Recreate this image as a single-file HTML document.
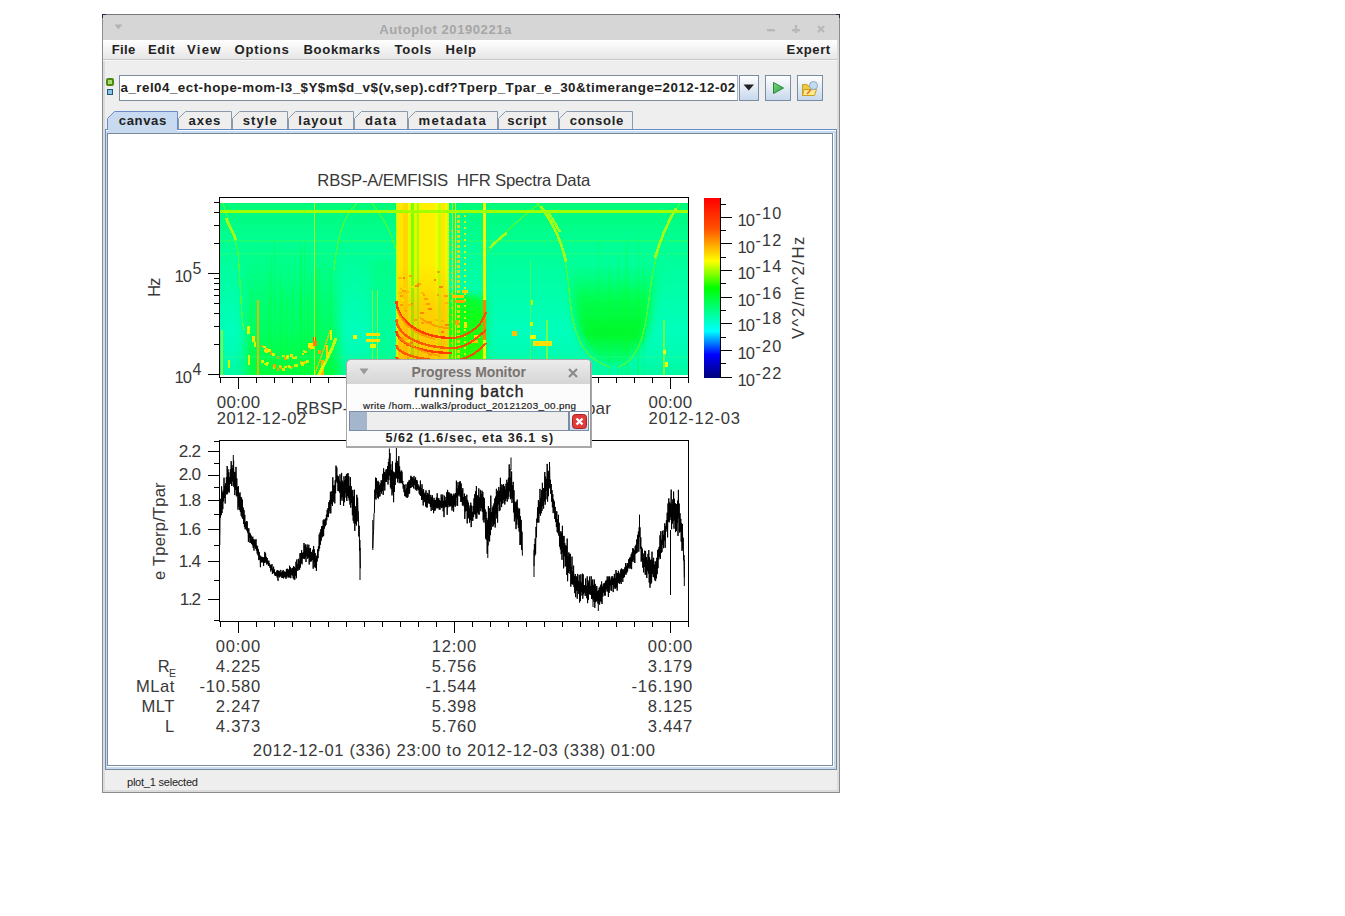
<!DOCTYPE html><html><head><meta charset="utf-8"><title>Autoplot</title><style>html,body{margin:0;padding:0;background:#fff;width:1345px;height:916px;overflow:hidden;position:relative}.t{position:absolute;white-space:pre;line-height:1;font-family:"Liberation Sans",sans-serif;color:#000}.p{color:#383838}svg{display:block}</style></head><body>
<div style="position:absolute;left:102px;top:14px;width:738px;height:779px;background:#eeeeee;box-sizing:border-box;border:1px solid #8c8c8c;border-top-color:#7a7a7a"></div>
<div style="position:absolute;left:103px;top:15px;width:736px;height:777px;box-sizing:border-box;border:2px solid #dcdcdc;border-top:none"></div>
<div style="position:absolute;left:103px;top:15px;width:736px;height:25px;background:#d6d6d6"></div>
<div style="position:absolute;left:102px;top:14px;width:4px;height:4px;border-left:1px solid #1a2a40;border-top:1px solid #1a2a40;box-sizing:border-box"></div>
<div style="position:absolute;left:836px;top:14px;width:4px;height:4px;border-right:1px solid #1a2a40;border-top:1px solid #1a2a40;box-sizing:border-box"></div>
<svg style="position:absolute;left:114px;top:24px" width="10" height="7"><path d="M0.5 0.5 L8.5 0.5 L4.5 5.5 Z" fill="#b4b4b4"/></svg>
<span class="t" style="left:379.30px;top:22.53px;font-size:13.08px;letter-spacing:0.54px;font-weight:bold;color:#a6a6a6;">Autoplot 20190221a</span>
<svg style="position:absolute;left:760px;top:20px" width="72" height="18"><rect x="7" y="9" width="8" height="2.4" fill="#b8b8b8"/><rect x="32" y="9" width="8" height="2.4" fill="#b8b8b8"/><rect x="34.8" y="5" width="2.4" height="8" fill="#b8b8b8"/><path d="M58 6 L64 12 M64 6 L58 12" stroke="#b8b8b8" stroke-width="2.4"/></svg>
<div style="position:absolute;left:103px;top:40px;width:734px;height:19px;background:linear-gradient(#ffffff,#e6e6e6)"></div>
<div style="position:absolute;left:103px;top:59px;width:734px;height:1px;background:#c8c8c8"></div>
<div style="position:absolute;left:103px;top:60px;width:734px;height:1px;background:#f8f8f8"></div>
<span class="t" style="left:111.70px;top:42.73px;font-size:13.08px;letter-spacing:0.39px;font-weight:bold;color:#222;">File</span>
<span class="t" style="left:148.00px;top:42.73px;font-size:13.08px;letter-spacing:0.60px;font-weight:bold;color:#222;">Edit</span>
<span class="t" style="left:187.00px;top:42.73px;font-size:13.08px;letter-spacing:1.30px;font-weight:bold;color:#222;">View</span>
<span class="t" style="left:234.40px;top:42.73px;font-size:13.08px;letter-spacing:0.83px;font-weight:bold;color:#222;">Options</span>
<span class="t" style="left:303.50px;top:42.73px;font-size:13.08px;letter-spacing:0.66px;font-weight:bold;color:#222;">Bookmarks</span>
<span class="t" style="left:394.40px;top:42.73px;font-size:13.08px;letter-spacing:0.75px;font-weight:bold;color:#222;">Tools</span>
<span class="t" style="left:445.60px;top:42.73px;font-size:13.08px;letter-spacing:0.68px;font-weight:bold;color:#222;">Help</span>
<span class="t" style="left:786.60px;top:42.73px;font-size:13.08px;letter-spacing:0.58px;font-weight:bold;color:#222;">Expert</span>
<div style="position:absolute;left:106px;top:78px;width:8px;height:8px;box-sizing:border-box;border:2px solid #4a8a10;border-radius:2px;background:#a8dc70"></div>
<div style="position:absolute;left:107px;top:89px;width:6px;height:6px;box-sizing:border-box;border:1px solid #1e5a80;background:#8cc4e6"></div>
<div style="position:absolute;left:119px;top:75px;width:619px;height:26px;background:#fff;box-sizing:border-box;border:1px solid #7a8ca0;border-right-color:#a8b4c0"></div>
<span class="t" style="left:120.50px;top:81.48px;font-size:13.37px;letter-spacing:0.48px;font-weight:bold;color:#222;">a_rel04_ect-hope-mom-l3_$Y$m$d_v$(v,sep).cdf?Tperp_Tpar_e_30&amp;timerange=2012-12-02</span>
<div style="position:absolute;left:739px;top:75px;width:20px;height:26px;box-sizing:border-box;border:1px solid #7a8ca0;background:linear-gradient(#ffffff,#c6d8ec)"></div>
<div style="position:absolute;left:765px;top:75px;width:26px;height:26px;box-sizing:border-box;border:1px solid #7a8ca0;background:linear-gradient(#ffffff,#c6d8ec)"></div>
<div style="position:absolute;left:797px;top:75px;width:26px;height:26px;box-sizing:border-box;border:1px solid #7a8ca0;background:linear-gradient(#ffffff,#c6d8ec)"></div>
<svg style="position:absolute;left:743px;top:84px" width="12" height="8"><path d="M0.5 0.5 L11 0.5 L5.75 6.5 Z" fill="#222"/></svg>
<svg style="position:absolute;left:771px;top:80px" width="16" height="16"><defs><linearGradient id="pg" x1="0" y1="0" x2="1" y2="1"><stop offset="0" stop-color="#7ad87a"/><stop offset="1" stop-color="#28a040"/></linearGradient></defs><path d="M2.5 2.5 L12.5 8 L2.5 13.5 Z" fill="url(#pg)" stroke="#2a8a3a" stroke-width="1"/></svg>
<svg style="position:absolute;left:800px;top:80px" width="20" height="18"><path d="M2.5 4.5 L7 4.5 L8 6 L13 6 L13 15.5 L2.5 15.5 Z" fill="#f0c848" stroke="#c8a020"/><path d="M4 9.5 L16.5 9.5 L14.5 15.5 L2.5 15.5 Z" fill="#ffe890" stroke="#c8a020"/><line x1="7" y1="14" x2="11" y2="9.5" stroke="#f07030" stroke-width="1.6"/><circle cx="13.5" cy="5.5" r="4" fill="#c0dcf4" stroke="#98aac0"/></svg>
<svg style="position:absolute;left:107px;top:111px" width="72" height="21"><path d="M0.5 20 L0.5 7.5 L7.5 0.5 L70.5 0.5 L70.5 20" fill="#c8daf0" stroke="#6a8ac6"/></svg>
<span class="t" style="left:118.75px;top:113.53px;font-size:13.08px;letter-spacing:0.63px;font-weight:bold;color:#222;">canvas</span>
<svg style="position:absolute;left:178px;top:111px" width="55" height="21"><path d="M0.5 20 L0.5 7.5 L7.5 0.5 L53.5 0.5 L53.5 20" fill="#eeeeee" stroke="#8a9aaa"/></svg>
<span class="t" style="left:188.50px;top:113.53px;font-size:13.08px;letter-spacing:0.93px;font-weight:bold;color:#222;">axes</span>
<svg style="position:absolute;left:232px;top:111px" width="57" height="21"><path d="M0.5 20 L0.5 7.5 L7.5 0.5 L55.5 0.5 L55.5 20" fill="#eeeeee" stroke="#8a9aaa"/></svg>
<span class="t" style="left:242.70px;top:113.53px;font-size:13.08px;letter-spacing:1.05px;font-weight:bold;color:#222;">style</span>
<svg style="position:absolute;left:288px;top:111px" width="67" height="21"><path d="M0.5 20 L0.5 7.5 L7.5 0.5 L65.5 0.5 L65.5 20" fill="#eeeeee" stroke="#8a9aaa"/></svg>
<span class="t" style="left:298.30px;top:113.53px;font-size:13.08px;letter-spacing:1.04px;font-weight:bold;color:#222;">layout</span>
<svg style="position:absolute;left:354px;top:111px" width="55" height="21"><path d="M0.5 20 L0.5 7.5 L7.5 0.5 L53.5 0.5 L53.5 20" fill="#eeeeee" stroke="#8a9aaa"/></svg>
<span class="t" style="left:365.00px;top:113.53px;font-size:13.08px;letter-spacing:1.34px;font-weight:bold;color:#222;">data</span>
<svg style="position:absolute;left:408px;top:111px" width="91" height="21"><path d="M0.5 20 L0.5 7.5 L7.5 0.5 L89.5 0.5 L89.5 20" fill="#eeeeee" stroke="#8a9aaa"/></svg>
<span class="t" style="left:418.50px;top:113.53px;font-size:13.08px;letter-spacing:1.42px;font-weight:bold;color:#222;">metadata</span>
<svg style="position:absolute;left:498px;top:111px" width="62" height="21"><path d="M0.5 20 L0.5 7.5 L7.5 0.5 L60.5 0.5 L60.5 20" fill="#eeeeee" stroke="#8a9aaa"/></svg>
<span class="t" style="left:507.30px;top:113.53px;font-size:13.08px;letter-spacing:0.68px;font-weight:bold;color:#222;">script</span>
<svg style="position:absolute;left:559px;top:111px" width="75" height="21"><path d="M0.5 20 L0.5 7.5 L7.5 0.5 L73.5 0.5 L73.5 20" fill="#eeeeee" stroke="#8a9aaa"/></svg>
<span class="t" style="left:569.80px;top:113.53px;font-size:13.08px;letter-spacing:0.68px;font-weight:bold;color:#222;">console</span>
<div style="position:absolute;left:105px;top:129px;width:732px;height:641px;box-sizing:border-box;border:1px solid #6a8ac6;border-bottom-color:#7a8a9a;border-right-color:#7a8a9a;background:#c8daf0"></div>
<div style="position:absolute;left:106px;top:130px;width:730px;height:1px;background:#fff"></div>
<div style="position:absolute;left:108px;top:129px;width:69px;height:2px;background:#c8daf0"></div>
<div style="position:absolute;left:107px;top:133px;width:727px;height:634px;background:#fff"></div>
<div style="position:absolute;left:107px;top:133px;width:726px;height:633px;box-sizing:border-box;border:1px solid #7a8a9a;background:#fff"></div>
<span class="t" style="left:127.00px;top:776.65px;font-size:11.05px;letter-spacing:-0.24px;color:#222;">plot_1 selected</span>
<svg style="position:absolute;left:0;top:0" width="1345" height="916" shape-rendering="crispEdges">
<defs><linearGradient id="sg" x1="0" y1="0" x2="0" y2="1"><stop offset="0" stop-color="#00fa78"/><stop offset="0.2" stop-color="#00ff90"/><stop offset="0.5" stop-color="#00ffa8"/><stop offset="0.75" stop-color="#00ffbc"/><stop offset="0.9" stop-color="#00fcb0"/><stop offset="1" stop-color="#00f8a0"/></linearGradient><linearGradient id="gU" x1="0" y1="0" x2="0" y2="1"><stop offset="0" stop-color="#00ff40" stop-opacity="0"/><stop offset="0.45" stop-color="#00ff40" stop-opacity="0.55"/><stop offset="1" stop-color="#00ff30" stop-opacity="0.9"/></linearGradient><linearGradient id="gU2" x1="0" y1="0" x2="0" y2="1"><stop offset="0" stop-color="#00ff40" stop-opacity="0"/><stop offset="0.35" stop-color="#00ff30" stop-opacity="0.75"/><stop offset="0.7" stop-color="#00f820" stop-opacity="0.95"/><stop offset="1" stop-color="#00ff40" stop-opacity="0.45"/></linearGradient><linearGradient id="yg" x1="0" y1="0" x2="0" y2="1"><stop offset="0" stop-color="#f0ff00"/><stop offset="0.3" stop-color="#ffee00"/><stop offset="0.55" stop-color="#ffd400"/><stop offset="0.8" stop-color="#ffb400"/><stop offset="1" stop-color="#ffa800"/></linearGradient><filter id="bl" x="-50%" y="-50%" width="200%" height="200%"><feGaussianBlur stdDeviation="5 2"/></filter><filter id="bl2" x="-50%" y="-50%" width="200%" height="200%"><feGaussianBlur stdDeviation="0.6"/></filter><clipPath id="sc"><rect x="220" y="203" width="468" height="172"/></clipPath></defs>
<g clip-path="url(#sc)">
<rect x="220" y="203" width="468" height="172" fill="url(#sg)"/>
<path d="M242 240 L336 240 L340 378 L246 378 Z" fill="url(#gU)" filter="url(#bl)"/>
<path d="M568 262 L660 262 L652 300 C648 335 642 358 615 365 C592 364 580 345 574 310 Z" fill="url(#gU2)" filter="url(#bl)"/>
<path d="M449 290 L486 300 L486 375 L449 375 Z" fill="#00ff40" filter="url(#bl)" opacity="0.9"/>
<path d="M370 260 L396 260 L396 375 L370 375 Z" fill="#00ff60" filter="url(#bl)" opacity="0.35"/>
<rect x="269.0" y="273" width="1" height="102" fill="#00ff20" opacity="0.35"/>
<rect x="279.6" y="276" width="1" height="99" fill="#00ff20" opacity="0.35"/>
<rect x="300.1" y="244" width="1" height="131" fill="#00ff20" opacity="0.35"/>
<rect x="251.1" y="290" width="1" height="85" fill="#00ff20" opacity="0.35"/>
<rect x="270.7" y="254" width="1" height="121" fill="#00ff20" opacity="0.35"/>
<rect x="329.7" y="268" width="1" height="107" fill="#00ff20" opacity="0.35"/>
<rect x="316.9" y="269" width="1" height="106" fill="#00ff20" opacity="0.35"/>
<rect x="301.1" y="249" width="1" height="126" fill="#00ff20" opacity="0.35"/>
<rect x="300.8" y="292" width="1" height="83" fill="#00ff20" opacity="0.35"/>
<rect x="291.9" y="284" width="1" height="91" fill="#00ff20" opacity="0.35"/>
<rect x="303.7" y="244" width="1" height="131" fill="#00ff20" opacity="0.35"/>
<rect x="310.7" y="275" width="1" height="100" fill="#00ff20" opacity="0.35"/>
<rect x="274.1" y="242" width="1" height="133" fill="#00ff20" opacity="0.35"/>
<rect x="319.2" y="268" width="1" height="107" fill="#00ff20" opacity="0.35"/>
<rect x="307.5" y="293" width="1" height="82" fill="#00ff20" opacity="0.35"/>
<rect x="307.1" y="295" width="1" height="80" fill="#00ff20" opacity="0.35"/>
<rect x="281.6" y="288" width="1" height="87" fill="#00ff20" opacity="0.35"/>
<rect x="285.6" y="296" width="1" height="79" fill="#00ff20" opacity="0.35"/>
<rect x="638.3" y="236" width="1" height="139" fill="#00ff20" opacity="0.3"/>
<rect x="597.5" y="243" width="1" height="132" fill="#00ff20" opacity="0.3"/>
<rect x="643.1" y="256" width="1" height="119" fill="#00ff20" opacity="0.3"/>
<rect x="624.5" y="248" width="1" height="127" fill="#00ff20" opacity="0.3"/>
<rect x="617.9" y="253" width="1" height="122" fill="#00ff20" opacity="0.3"/>
<rect x="609.3" y="265" width="1" height="110" fill="#00ff20" opacity="0.3"/>
<rect x="622.1" y="284" width="1" height="91" fill="#00ff20" opacity="0.3"/>
<rect x="627.5" y="286" width="1" height="89" fill="#00ff20" opacity="0.3"/>
<rect x="637.1" y="289" width="1" height="86" fill="#00ff20" opacity="0.3"/>
<rect x="626.9" y="240" width="1" height="135" fill="#00ff20" opacity="0.3"/>
<rect x="220" y="240" width="468" height="2" fill="#30ff60" opacity="0.55"/>
<rect x="220" y="253" width="468" height="1.5" fill="#30ff70" opacity="0.35"/>
<rect x="220" y="356" width="468" height="1.5" fill="#20ff80" opacity="0.3"/>
<path d="M223 203 C226 215 233 230 238 252 C241 290 241 318 244 330" fill="none" stroke="#60ff20" stroke-width="1.4" opacity="0.75"/>
<path d="M334 270 C337 240 342 218 357 203" fill="none" stroke="#60ff20" stroke-width="1.4" opacity="0.75"/>
<path d="M372 203 C380 215 390 226 396 250" fill="none" stroke="#60ff20" stroke-width="1.4" opacity="0.75"/>
<path d="M537 203 C552 222 566 245 569 290 C572 330 580 358 610 367" fill="none" stroke="#60ff20" stroke-width="1.4" opacity="0.75"/>
<path d="M680 203 C668 222 655 250 650 290 C646 330 640 360 618 367" fill="none" stroke="#60ff20" stroke-width="1.4" opacity="0.75"/>
<path d="M488 252 C500 236 518 220 540 203" fill="none" stroke="#60ff20" stroke-width="1.4" opacity="0.75"/>
<path d="M226 218 C229 226 233 232 236 240" fill="none" stroke="#c8ff00" stroke-width="2.6" opacity="0.8"/>
<path d="M676 208 C668 222 660 240 655 258" fill="none" stroke="#c8ff00" stroke-width="2.6" opacity="0.8"/>
<path d="M490 248 C495 242 500 238 507 233" fill="none" stroke="#c8ff00" stroke-width="2.6" opacity="0.8"/>
<path d="M541 206 C552 222 562 240 566 262" fill="none" stroke="#c8ff00" stroke-width="2.6" opacity="0.8"/>
<path d="M547 210 C552 218 556 225 560 232" fill="none" stroke="#c8ff00" stroke-width="2.6" opacity="0.8"/>
<rect x="284" y="357" width="3" height="3" fill="#ffa000" opacity="0.9"/>
<rect x="286" y="355" width="3" height="2" fill="#ffa000" opacity="0.9"/>
<rect x="266" y="348" width="2" height="3" fill="#ffc800" opacity="0.9"/>
<rect x="309" y="348" width="2" height="2" fill="#ffa000" opacity="0.9"/>
<rect x="264" y="349" width="2" height="3" fill="#ffe000" opacity="0.9"/>
<rect x="277" y="356" width="2" height="3" fill="#ffa000" opacity="0.9"/>
<rect x="286" y="356" width="3" height="3" fill="#e8ff00" opacity="0.9"/>
<rect x="311" y="347" width="3" height="2" fill="#e8ff00" opacity="0.9"/>
<rect x="287" y="355" width="2" height="3" fill="#e8ff00" opacity="0.9"/>
<rect x="266" y="350" width="2" height="2" fill="#ffc800" opacity="0.9"/>
<rect x="272" y="353" width="3" height="3" fill="#e8ff00" opacity="0.9"/>
<rect x="265" y="350" width="3" height="3" fill="#ffe000" opacity="0.9"/>
<rect x="265" y="348" width="3" height="2" fill="#ffc800" opacity="0.9"/>
<rect x="268" y="349" width="3" height="3" fill="#e8ff00" opacity="0.9"/>
<rect x="270" y="351" width="2" height="2" fill="#ffa000" opacity="0.9"/>
<rect x="282" y="355" width="3" height="2" fill="#d0ff00" opacity="0.9"/>
<rect x="261" y="345" width="2" height="2" fill="#ffa000" opacity="0.9"/>
<rect x="270" y="353" width="2" height="2" fill="#ffa000" opacity="0.9"/>
<rect x="310" y="346" width="2" height="3" fill="#ffe000" opacity="0.9"/>
<rect x="303" y="350" width="2" height="2" fill="#d0ff00" opacity="0.9"/>
<rect x="290" y="354" width="3" height="3" fill="#ffe000" opacity="0.9"/>
<rect x="292" y="357" width="3" height="2" fill="#ffe000" opacity="0.9"/>
<rect x="304" y="351" width="3" height="2" fill="#ffe000" opacity="0.9"/>
<rect x="302" y="353" width="2" height="2" fill="#ffe000" opacity="0.9"/>
<rect x="295" y="356" width="2" height="3" fill="#d0ff00" opacity="0.9"/>
<rect x="263" y="346" width="3" height="2" fill="#e8ff00" opacity="0.9"/>
<rect x="294" y="364" width="3" height="3" fill="#d0ff00" opacity="0.9"/>
<rect x="284" y="366" width="3" height="2" fill="#e8ff00" opacity="0.9"/>
<rect x="273" y="366" width="2" height="3" fill="#ffe000" opacity="0.9"/>
<rect x="279" y="365" width="2" height="3" fill="#ffe000" opacity="0.9"/>
<rect x="277" y="368" width="2" height="3" fill="#ffa000" opacity="0.9"/>
<rect x="266" y="364" width="2" height="2" fill="#d0ff00" opacity="0.9"/>
<rect x="302" y="362" width="3" height="2" fill="#d0ff00" opacity="0.9"/>
<rect x="261" y="360" width="3" height="3" fill="#e8ff00" opacity="0.9"/>
<rect x="266" y="362" width="3" height="2" fill="#e8ff00" opacity="0.9"/>
<rect x="301" y="363" width="3" height="3" fill="#ffe000" opacity="0.9"/>
<rect x="264" y="363" width="3" height="2" fill="#d0ff00" opacity="0.9"/>
<rect x="300" y="361" width="3" height="3" fill="#ffa000" opacity="0.9"/>
<rect x="287" y="365" width="2" height="2" fill="#ffa000" opacity="0.9"/>
<rect x="306" y="360" width="3" height="3" fill="#d0ff00" opacity="0.9"/>
<rect x="280" y="366" width="2" height="3" fill="#ffa000" opacity="0.9"/>
<rect x="288" y="365" width="2" height="3" fill="#d0ff00" opacity="0.9"/>
<rect x="296" y="364" width="2" height="3" fill="#d0ff00" opacity="0.9"/>
<rect x="274" y="365" width="2" height="3" fill="#ffa000" opacity="0.9"/>
<rect x="290" y="366" width="2" height="3" fill="#d0ff00" opacity="0.9"/>
<rect x="279" y="366" width="3" height="2" fill="#ffc800" opacity="0.9"/>
<rect x="300" y="362" width="3" height="2" fill="#d0ff00" opacity="0.9"/>
<rect x="266" y="362" width="2" height="2" fill="#d0ff00" opacity="0.9"/>
<rect x="304" y="361" width="2" height="3" fill="#ffc800" opacity="0.9"/>
<rect x="282" y="368" width="3" height="3" fill="#ffe000" opacity="0.9"/>
<rect x="291" y="366" width="2" height="2" fill="#ffa000" opacity="0.9"/>
<rect x="273" y="364" width="3" height="3" fill="#ffa000" opacity="0.9"/>
<rect x="247" y="326" width="3" height="8" fill="#e0ff00"/>
<rect x="252" y="336" width="3" height="6" fill="#ffe000"/>
<rect x="254" y="342" width="2" height="5" fill="#d0ff00"/>
<rect x="228" y="360" width="2" height="8" fill="#d0ff00"/>
<rect x="248" y="355" width="2" height="10" fill="#e0ff00"/>
<rect x="308" y="343" width="6" height="5" fill="#ffe800"/>
<rect x="313" y="337" width="3" height="4" fill="#ff5000"/>
<rect x="330" y="330" width="2" height="10" fill="#e0ff00"/>
<rect x="326" y="345" width="2" height="12" fill="#ffd000"/>
<rect x="321" y="360" width="3" height="15" fill="#ffb000"/>
<path d="M336 338 C332 350 326 362 318 376" fill="none" stroke="#e8ff00" stroke-width="3" opacity="0.85"/>
<path d="M330 330 C326 345 320 360 314 376" fill="none" stroke="#ffc000" stroke-width="1.5" opacity="0.7"/>
<rect x="314.09999999999997" y="203" width="1.2" height="172" fill="#d8ff00" opacity="0.85"/>
<rect x="257.1" y="300" width="1.8" height="75" fill="#ffb000" opacity="0.85"/>
<rect x="221.25" y="330" width="1.5" height="45" fill="#c0ff00" opacity="0.7"/>
<rect x="371.5" y="290" width="1" height="85" fill="#c8ff00" opacity="0.6"/>
<rect x="376.5" y="290" width="1" height="85" fill="#e0ff00" opacity="0.6"/>
<rect x="529.5" y="260" width="1" height="115" fill="#80ff20" opacity="0.5"/>
<rect x="546.4" y="320" width="1.2" height="55" fill="#c0ff00" opacity="0.6"/>
<rect x="663.4" y="320" width="1.2" height="55" fill="#c0ff00" opacity="0.6"/>
<rect x="353" y="335" width="4" height="4" fill="#f0ff00"/>
<rect x="366" y="333" width="14" height="3" fill="#ffe000"/>
<rect x="366" y="339" width="14" height="3" fill="#ffe000"/>
<rect x="370" y="344" width="6" height="4" fill="#e0ff00"/>
<rect x="512" y="331" width="5" height="5" fill="#ffc000"/>
<rect x="530" y="335" width="6" height="4" fill="#e8ff00"/>
<rect x="533" y="341" width="19" height="5" fill="#ffe000"/>
<rect x="530" y="322" width="3" height="4" fill="#d0ff00"/>
<rect x="531" y="300" width="2" height="5" fill="#c0ff00"/>
<rect x="663" y="350" width="3" height="4" fill="#f0ff00"/>
<rect x="665" y="362" width="3" height="5" fill="#f0ff00"/>
<rect x="313" y="341" width="4" height="5" fill="#ff8000"/>
<rect x="318" y="350" width="3" height="4" fill="#ffa000"/>
<rect x="396" y="203" width="2.0" height="172" fill="#c8ff00"/>
<rect x="398" y="203" width="5.0" height="172" fill="#ffe800"/>
<rect x="403" y="203" width="4.7" height="172" fill="#ffd800"/>
<rect x="407.7" y="203" width="3.3" height="172" fill="#e8ff00"/>
<rect x="411" y="203" width="3.0" height="172" fill="#80ff00"/>
<rect x="414" y="203" width="3.0" height="172" fill="#e0ff00"/>
<rect x="417" y="203" width="1.5" height="172" fill="#a0ff00"/>
<rect x="418.5" y="203" width="16.5" height="172" fill="#fff000"/>
<rect x="435" y="203" width="3.0" height="172" fill="#f0ff00"/>
<rect x="438" y="203" width="3.0" height="172" fill="#c8ff00"/>
<rect x="441" y="203" width="4.0" height="172" fill="#ffe800"/>
<rect x="445" y="203" width="4.0" height="172" fill="#e8ff00"/>
<defs><linearGradient id="og" x1="0" y1="0" x2="0" y2="1"><stop offset="0" stop-color="#ffa000" stop-opacity="0"/><stop offset="0.35" stop-color="#ffa000" stop-opacity="0"/><stop offset="0.6" stop-color="#ff9800" stop-opacity="0.35"/><stop offset="1" stop-color="#ff9000" stop-opacity="0.5"/></linearGradient></defs>
<rect x="398" y="203" width="51" height="172" fill="url(#og)"/>
<rect x="406" y="340" width="4" height="2" fill="#ffe000" opacity="0.8"/>
<rect x="421" y="292" width="3" height="2" fill="#ffb000" opacity="0.8"/>
<rect x="423" y="294" width="2" height="2" fill="#ff9000" opacity="0.8"/>
<rect x="416" y="330" width="2" height="2" fill="#ffb000" opacity="0.8"/>
<rect x="437" y="294" width="2" height="2" fill="#ff9000" opacity="0.8"/>
<rect x="419" y="372" width="3" height="2" fill="#ff7000" opacity="0.8"/>
<rect x="400" y="304" width="3" height="2" fill="#ff9000" opacity="0.8"/>
<rect x="430" y="366" width="2" height="2" fill="#ffb000" opacity="0.8"/>
<rect x="434" y="279" width="2" height="2" fill="#ff7000" opacity="0.8"/>
<rect x="406" y="344" width="3" height="2" fill="#ff7000" opacity="0.8"/>
<rect x="405" y="338" width="3" height="2" fill="#ffb000" opacity="0.8"/>
<rect x="402" y="290" width="4" height="2" fill="#ff9000" opacity="0.8"/>
<rect x="404" y="319" width="3" height="2" fill="#ffb000" opacity="0.8"/>
<rect x="415" y="285" width="4" height="2" fill="#ff7000" opacity="0.8"/>
<rect x="412" y="367" width="4" height="2" fill="#ff7000" opacity="0.8"/>
<rect x="414" y="319" width="3" height="2" fill="#ff9000" opacity="0.8"/>
<rect x="439" y="286" width="4" height="2" fill="#ff7000" opacity="0.8"/>
<rect x="398" y="277" width="4" height="2" fill="#ffb000" opacity="0.8"/>
<rect x="426" y="303" width="4" height="2" fill="#ff9000" opacity="0.8"/>
<rect x="407" y="287" width="3" height="2" fill="#ffe000" opacity="0.8"/>
<rect x="415" y="331" width="3" height="2" fill="#ffb000" opacity="0.8"/>
<rect x="403" y="277" width="2" height="2" fill="#ff7000" opacity="0.8"/>
<rect x="416" y="340" width="4" height="2" fill="#ffb000" opacity="0.8"/>
<rect x="418" y="371" width="4" height="2" fill="#ff9000" opacity="0.8"/>
<rect x="441" y="320" width="3" height="2" fill="#ffb000" opacity="0.8"/>
<rect x="444" y="295" width="4" height="2" fill="#ff9000" opacity="0.8"/>
<rect x="420" y="312" width="4" height="2" fill="#ff7000" opacity="0.8"/>
<rect x="401" y="299" width="3" height="2" fill="#ffe000" opacity="0.8"/>
<rect x="400" y="295" width="3" height="2" fill="#ff9000" opacity="0.8"/>
<rect x="441" y="336" width="2" height="2" fill="#ffb000" opacity="0.8"/>
<rect x="435" y="319" width="3" height="2" fill="#ffb000" opacity="0.8"/>
<rect x="445" y="324" width="4" height="2" fill="#ff7000" opacity="0.8"/>
<rect x="399" y="292" width="3" height="2" fill="#ffb000" opacity="0.8"/>
<rect x="441" y="331" width="3" height="2" fill="#ff7000" opacity="0.8"/>
<rect x="426" y="357" width="3" height="2" fill="#ffb000" opacity="0.8"/>
<rect x="424" y="298" width="4" height="2" fill="#ff9000" opacity="0.8"/>
<rect x="417" y="283" width="4" height="2" fill="#ff9000" opacity="0.8"/>
<rect x="411" y="303" width="2" height="2" fill="#ff7000" opacity="0.8"/>
<rect x="411" y="311" width="2" height="2" fill="#ffb000" opacity="0.8"/>
<rect x="405" y="310" width="2" height="2" fill="#ff9000" opacity="0.8"/>
<rect x="429" y="350" width="2" height="2" fill="#ff9000" opacity="0.8"/>
<rect x="430" y="283" width="4" height="2" fill="#ffe000" opacity="0.8"/>
<rect x="417" y="361" width="4" height="2" fill="#ffb000" opacity="0.8"/>
<rect x="407" y="357" width="2" height="2" fill="#ff9000" opacity="0.8"/>
<rect x="428" y="321" width="4" height="2" fill="#ff9000" opacity="0.8"/>
<rect x="437" y="271" width="3" height="2" fill="#ff9000" opacity="0.8"/>
<rect x="417" y="328" width="4" height="2" fill="#ffb000" opacity="0.8"/>
<rect x="410" y="341" width="3" height="2" fill="#ff9000" opacity="0.8"/>
<rect x="410" y="286" width="4" height="2" fill="#ffe000" opacity="0.8"/>
<rect x="438" y="352" width="3" height="2" fill="#ff9000" opacity="0.8"/>
<rect x="425" y="276" width="4" height="2" fill="#ffe000" opacity="0.8"/>
<rect x="445" y="302" width="4" height="2" fill="#ffb000" opacity="0.8"/>
<rect x="401" y="353" width="2" height="2" fill="#ffe000" opacity="0.8"/>
<rect x="401" y="337" width="3" height="2" fill="#ff9000" opacity="0.8"/>
<rect x="441" y="336" width="4" height="2" fill="#ff7000" opacity="0.8"/>
<rect x="423" y="367" width="4" height="2" fill="#ff7000" opacity="0.8"/>
<rect x="421" y="322" width="3" height="2" fill="#ff9000" opacity="0.8"/>
<rect x="409" y="275" width="3" height="2" fill="#ff9000" opacity="0.8"/>
<rect x="410" y="342" width="3" height="2" fill="#ff7000" opacity="0.8"/>
<rect x="420" y="294" width="3" height="2" fill="#ffe000" opacity="0.8"/>
<rect x="422" y="334" width="4" height="2" fill="#ff9000" opacity="0.8"/>
<rect x="400" y="288" width="3" height="2" fill="#ffb000" opacity="0.8"/>
<rect x="436" y="334" width="4" height="2" fill="#ffe000" opacity="0.8"/>
<rect x="410" y="364" width="3" height="2" fill="#ffe000" opacity="0.8"/>
<rect x="428" y="354" width="4" height="2" fill="#ff9000" opacity="0.8"/>
<rect x="406" y="291" width="3" height="2" fill="#ffb000" opacity="0.8"/>
<rect x="402" y="288" width="4" height="2" fill="#ffe000" opacity="0.8"/>
<rect x="428" y="308" width="4" height="2" fill="#ff7000" opacity="0.8"/>
<rect x="446" y="371" width="2" height="2" fill="#ff7000" opacity="0.8"/>
<rect x="408" y="304" width="4" height="2" fill="#ffb000" opacity="0.8"/>
<defs><linearGradient id="g3" x1="0" y1="0" x2="0" y2="1"><stop offset="0" stop-color="#00ff40" stop-opacity="0"/><stop offset="0.5" stop-color="#10ff10" stop-opacity="0"/><stop offset="0.65" stop-color="#10ff10" stop-opacity="0.85"/><stop offset="1" stop-color="#30ff00" stop-opacity="1"/></linearGradient></defs>
<rect x="449" y="203" width="35" height="172" fill="url(#g3)"/>
<rect x="451.5" y="203" width="1.0" height="172" fill="#e8ff00" opacity="0.7" />
<rect x="455" y="203" width="1.0" height="172" fill="#e8ff00" opacity="0.9" />
<rect x="483.3" y="203" width="2.5" height="172" fill="#f0ff00" opacity="1" />
<line x1="458.5" y1="215" x2="458.5" y2="375" stroke="#ffd000" stroke-width="3" stroke-dasharray="3 2" opacity="0.9"/>
<line x1="464.5" y1="215" x2="464.5" y2="375" stroke="#f0ff00" stroke-width="2" stroke-dasharray="2 4" opacity="0.8"/>
<line x1="452" y1="230" x2="452" y2="375" stroke="#ffc000" stroke-width="2" stroke-dasharray="2 5" opacity="0.8"/>
<rect x="452" y="295" width="12" height="3" fill="#ffc000"/>
<rect x="455" y="300" width="10" height="3" fill="#ffa000"/>
<rect x="462" y="290" width="6" height="3" fill="#ffd000"/>
<rect x="455" y="320" width="4" height="5" fill="#ffa000"/>
<rect x="464" y="322" width="3" height="6" fill="#ffe000"/>
<rect x="470" y="340" width="8" height="3" fill="#ffc000"/>
<rect x="474" y="335" width="6" height="3" fill="#ffe000"/>
<path d="M396.5 301.0 L396.6 302.8 L396.8 304.6 L397.1 306.4 L397.6 308.2 L398.2 310.0 L398.9 311.7 L399.7 313.5 L400.7 315.2 L401.8 316.8 L403.1 318.4 L404.4 320.0 L405.9 321.6 L407.4 323.0 L409.1 324.5 L410.9 325.8 L412.8 327.2 L414.7 328.4 L416.8 329.6 L418.9 330.7 L421.2 331.8 L423.5 332.7 L425.8 333.6 L428.3 334.4 L430.8 335.2 L433.3 335.8 L435.9 336.4 L438.5 336.9 L441.2 337.3 L443.9 337.6 L446.6 337.8 L449.3 338.0 L452.0 338.0" fill="none" stroke="#ff3000" stroke-width="2.4" opacity="0.92"/>
<path d="M396.5 319.5 L396.6 320.9 L396.8 322.3 L397.1 323.7 L397.6 325.1 L398.2 326.4 L398.9 327.8 L399.7 329.1 L400.7 330.4 L401.8 331.7 L403.1 332.9 L404.4 334.2 L405.9 335.3 L407.4 336.5 L409.1 337.6 L410.9 338.6 L412.8 339.7 L414.7 340.6 L416.8 341.5 L418.9 342.4 L421.2 343.2 L423.5 343.9 L425.8 344.6 L428.3 345.3 L430.8 345.8 L433.3 346.3 L435.9 346.8 L438.5 347.1 L441.2 347.5 L443.9 347.7 L446.6 347.9 L449.3 348.0 L452.0 348.0" fill="none" stroke="#ff5000" stroke-width="2.4" opacity="0.92"/>
<path d="M396.5 331.0 L396.6 332.1 L396.8 333.2 L397.1 334.2 L397.6 335.3 L398.2 336.3 L398.9 337.4 L399.7 338.4 L400.7 339.4 L401.8 340.4 L403.1 341.4 L404.4 342.3 L405.9 343.2 L407.4 344.1 L409.1 345.0 L410.9 345.8 L412.8 346.6 L414.7 347.3 L416.8 348.0 L418.9 348.7 L421.2 349.3 L423.5 349.9 L425.8 350.4 L428.3 350.9 L430.8 351.3 L433.3 351.7 L435.9 352.1 L438.5 352.3 L441.2 352.6 L443.9 352.8 L446.6 352.9 L449.3 353.0 L452.0 353.0" fill="none" stroke="#ff3000" stroke-width="2.4" opacity="0.92"/>
<path d="M396.5 345.0 L396.6 345.8 L396.8 346.6 L397.1 347.3 L397.6 348.1 L398.2 348.9 L398.9 349.6 L399.7 350.4 L400.7 351.1 L401.8 351.8 L403.1 352.5 L404.4 353.2 L405.9 353.9 L407.4 354.5 L409.1 355.2 L410.9 355.7 L412.8 356.3 L414.7 356.9 L416.8 357.4 L418.9 357.9 L421.2 358.3 L423.5 358.7 L425.8 359.1 L428.3 359.5 L430.8 359.8 L433.3 360.1 L435.9 360.3 L438.5 360.5 L441.2 360.7 L443.9 360.8 L446.6 360.9 L449.3 361.0 L452.0 361.0" fill="none" stroke="#ff5000" stroke-width="2.4" opacity="0.92"/>
<path d="M396.5 357.0 L396.6 357.6 L396.8 358.2 L397.1 358.8 L397.6 359.3 L398.2 359.9 L398.9 360.5 L399.7 361.0 L400.7 361.6 L401.8 362.1 L403.1 362.7 L404.4 363.2 L405.9 363.7 L407.4 364.1 L409.1 364.6 L410.9 365.1 L412.8 365.5 L414.7 365.9 L416.8 366.3 L418.9 366.6 L421.2 367.0 L423.5 367.3 L425.8 367.6 L428.3 367.8 L430.8 368.1 L433.3 368.3 L435.9 368.5 L438.5 368.6 L441.2 368.8 L443.9 368.9 L446.6 368.9 L449.3 369.0 L452.0 369.0" fill="none" stroke="#ff3000" stroke-width="2.4" opacity="0.92"/>
<path d="M396.5 368.0 L396.6 368.4 L396.8 368.8 L397.1 369.2 L397.6 369.6 L398.2 369.9 L398.9 370.3 L399.7 370.7 L400.7 371.1 L401.8 371.4 L403.1 371.8 L404.4 372.1 L405.9 372.4 L407.4 372.8 L409.1 373.1 L410.9 373.4 L412.8 373.7 L414.7 373.9 L416.8 374.2 L418.9 374.4 L421.2 374.7 L423.5 374.9 L425.8 375.1 L428.3 375.2 L430.8 375.4 L433.3 375.5 L435.9 375.7 L438.5 375.8 L441.2 375.8 L443.9 375.9 L446.6 376.0 L449.3 376.0 L452.0 376.0" fill="none" stroke="#ff5000" stroke-width="2.4" opacity="0.92"/>
<path d="M452 338 C462 338 472 332 478 326 C482 322 484 318 486 312" fill="none" stroke="#ff4000" stroke-width="2.2" opacity="0.9"/>
<path d="M452 348 C465 348 474 341 486 330" fill="none" stroke="#ff4000" stroke-width="2.2" opacity="0.9"/>
<path d="M452 361 C468 360 478 352 486 343" fill="none" stroke="#ff4000" stroke-width="2.2" opacity="0.9"/>
<rect x="483" y="300" width="3" height="40" fill="#ff5000" opacity="0.7"/>
<path d="M397 310 C404 325 414 334 435 339" fill="none" stroke="#ff9000" stroke-width="2" opacity="0.75"/>
<path d="M399 338 C408 344 420 352 440 356" fill="none" stroke="#ff9000" stroke-width="2" opacity="0.75"/>
<path d="M401 365 C414 368 428 374 445 375" fill="none" stroke="#ff9000" stroke-width="2" opacity="0.75"/>
<path d="M420 318 C430 325 440 328 449 328" fill="none" stroke="#ff9000" stroke-width="2" opacity="0.75"/>
<rect x="220" y="210.3" width="468" height="2.4" fill="#a0ff00"/>
</g>
<defs><linearGradient id="cb" x1="0" y1="0" x2="0" y2="1"><stop offset="0" stop-color="#ff0000"/><stop offset="0.17" stop-color="#ff5000"/><stop offset="0.35" stop-color="#ffff00"/><stop offset="0.5" stop-color="#00ff00"/><stop offset="0.74" stop-color="#00ffff"/><stop offset="0.87" stop-color="#0000ff"/><stop offset="1" stop-color="#000078"/></linearGradient></defs>
<rect x="704" y="198" width="16" height="180" fill="url(#cb)"/>
<rect x="219.5" y="197.5" width="469" height="180" fill="none" stroke="#000" stroke-width="1"/>
<line x1="208" y1="374.5" x2="219.5" y2="374.5" stroke="#000"/>
<line x1="214" y1="344.1" x2="219.5" y2="344.1" stroke="#000"/>
<line x1="214" y1="326.3" x2="219.5" y2="326.3" stroke="#000"/>
<line x1="214" y1="313.7" x2="219.5" y2="313.7" stroke="#000"/>
<line x1="214" y1="303.9" x2="219.5" y2="303.9" stroke="#000"/>
<line x1="214" y1="295.9" x2="219.5" y2="295.9" stroke="#000"/>
<line x1="214" y1="289.1" x2="219.5" y2="289.1" stroke="#000"/>
<line x1="214" y1="283.3" x2="219.5" y2="283.3" stroke="#000"/>
<line x1="214" y1="278.1" x2="219.5" y2="278.1" stroke="#000"/>
<line x1="208" y1="273.5" x2="219.5" y2="273.5" stroke="#000"/>
<line x1="214" y1="243.1" x2="219.5" y2="243.1" stroke="#000"/>
<line x1="214" y1="225.3" x2="219.5" y2="225.3" stroke="#000"/>
<line x1="214" y1="212.7" x2="219.5" y2="212.7" stroke="#000"/>
<line x1="214" y1="202.9" x2="219.5" y2="202.9" stroke="#000"/>
<line x1="220.5" y1="377.5" x2="220.5" y2="382.5" stroke="#000"/>
<line x1="220.5" y1="621.5" x2="220.5" y2="626.5" stroke="#000"/>
<line x1="238.5" y1="377.5" x2="238.5" y2="388.5" stroke="#000"/>
<line x1="238.5" y1="621.5" x2="238.5" y2="632.5" stroke="#000"/>
<line x1="256.5" y1="377.5" x2="256.5" y2="382.5" stroke="#000"/>
<line x1="256.5" y1="621.5" x2="256.5" y2="626.5" stroke="#000"/>
<line x1="274.5" y1="377.5" x2="274.5" y2="382.5" stroke="#000"/>
<line x1="274.5" y1="621.5" x2="274.5" y2="626.5" stroke="#000"/>
<line x1="292.5" y1="377.5" x2="292.5" y2="382.5" stroke="#000"/>
<line x1="292.5" y1="621.5" x2="292.5" y2="626.5" stroke="#000"/>
<line x1="310.5" y1="377.5" x2="310.5" y2="382.5" stroke="#000"/>
<line x1="310.5" y1="621.5" x2="310.5" y2="626.5" stroke="#000"/>
<line x1="328.5" y1="377.5" x2="328.5" y2="382.5" stroke="#000"/>
<line x1="328.5" y1="621.5" x2="328.5" y2="626.5" stroke="#000"/>
<line x1="346.5" y1="377.5" x2="346.5" y2="382.5" stroke="#000"/>
<line x1="346.5" y1="621.5" x2="346.5" y2="626.5" stroke="#000"/>
<line x1="364.5" y1="377.5" x2="364.5" y2="382.5" stroke="#000"/>
<line x1="364.5" y1="621.5" x2="364.5" y2="626.5" stroke="#000"/>
<line x1="382.5" y1="377.5" x2="382.5" y2="382.5" stroke="#000"/>
<line x1="382.5" y1="621.5" x2="382.5" y2="626.5" stroke="#000"/>
<line x1="400.5" y1="377.5" x2="400.5" y2="382.5" stroke="#000"/>
<line x1="400.5" y1="621.5" x2="400.5" y2="626.5" stroke="#000"/>
<line x1="418.5" y1="377.5" x2="418.5" y2="382.5" stroke="#000"/>
<line x1="418.5" y1="621.5" x2="418.5" y2="626.5" stroke="#000"/>
<line x1="436.5" y1="377.5" x2="436.5" y2="382.5" stroke="#000"/>
<line x1="436.5" y1="621.5" x2="436.5" y2="626.5" stroke="#000"/>
<line x1="454.5" y1="377.5" x2="454.5" y2="388.5" stroke="#000"/>
<line x1="454.5" y1="621.5" x2="454.5" y2="632.5" stroke="#000"/>
<line x1="472.5" y1="377.5" x2="472.5" y2="382.5" stroke="#000"/>
<line x1="472.5" y1="621.5" x2="472.5" y2="626.5" stroke="#000"/>
<line x1="490.5" y1="377.5" x2="490.5" y2="382.5" stroke="#000"/>
<line x1="490.5" y1="621.5" x2="490.5" y2="626.5" stroke="#000"/>
<line x1="508.5" y1="377.5" x2="508.5" y2="382.5" stroke="#000"/>
<line x1="508.5" y1="621.5" x2="508.5" y2="626.5" stroke="#000"/>
<line x1="526.5" y1="377.5" x2="526.5" y2="382.5" stroke="#000"/>
<line x1="526.5" y1="621.5" x2="526.5" y2="626.5" stroke="#000"/>
<line x1="544.5" y1="377.5" x2="544.5" y2="382.5" stroke="#000"/>
<line x1="544.5" y1="621.5" x2="544.5" y2="626.5" stroke="#000"/>
<line x1="562.5" y1="377.5" x2="562.5" y2="382.5" stroke="#000"/>
<line x1="562.5" y1="621.5" x2="562.5" y2="626.5" stroke="#000"/>
<line x1="580.5" y1="377.5" x2="580.5" y2="382.5" stroke="#000"/>
<line x1="580.5" y1="621.5" x2="580.5" y2="626.5" stroke="#000"/>
<line x1="598.5" y1="377.5" x2="598.5" y2="382.5" stroke="#000"/>
<line x1="598.5" y1="621.5" x2="598.5" y2="626.5" stroke="#000"/>
<line x1="616.5" y1="377.5" x2="616.5" y2="382.5" stroke="#000"/>
<line x1="616.5" y1="621.5" x2="616.5" y2="626.5" stroke="#000"/>
<line x1="634.5" y1="377.5" x2="634.5" y2="382.5" stroke="#000"/>
<line x1="634.5" y1="621.5" x2="634.5" y2="626.5" stroke="#000"/>
<line x1="652.5" y1="377.5" x2="652.5" y2="382.5" stroke="#000"/>
<line x1="652.5" y1="621.5" x2="652.5" y2="626.5" stroke="#000"/>
<line x1="670.5" y1="377.5" x2="670.5" y2="388.5" stroke="#000"/>
<line x1="670.5" y1="621.5" x2="670.5" y2="632.5" stroke="#000"/>
<line x1="688.5" y1="377.5" x2="688.5" y2="382.5" stroke="#000"/>
<line x1="688.5" y1="621.5" x2="688.5" y2="626.5" stroke="#000"/>
<rect x="219.5" y="440.5" width="469" height="181" fill="none" stroke="#000" stroke-width="1"/>
<line x1="214" y1="620.5" x2="219.5" y2="620.5" stroke="#000"/>
<line x1="208" y1="599.5" x2="219.5" y2="599.5" stroke="#000"/>
<line x1="214" y1="580.5" x2="219.5" y2="580.5" stroke="#000"/>
<line x1="208" y1="561.5" x2="219.5" y2="561.5" stroke="#000"/>
<line x1="214" y1="545.5" x2="219.5" y2="545.5" stroke="#000"/>
<line x1="208" y1="529.5" x2="219.5" y2="529.5" stroke="#000"/>
<line x1="214" y1="514.5" x2="219.5" y2="514.5" stroke="#000"/>
<line x1="208" y1="500.5" x2="219.5" y2="500.5" stroke="#000"/>
<line x1="214" y1="487.5" x2="219.5" y2="487.5" stroke="#000"/>
<line x1="208" y1="475.5" x2="219.5" y2="475.5" stroke="#000"/>
<line x1="214" y1="463.5" x2="219.5" y2="463.5" stroke="#000"/>
<line x1="208" y1="451.5" x2="219.5" y2="451.5" stroke="#000"/>
<line x1="214" y1="441.5" x2="219.5" y2="441.5" stroke="#000"/>
<line x1="720" y1="204.5" x2="726" y2="204.5" stroke="#000"/>
<line x1="720" y1="217.5" x2="732" y2="217.5" stroke="#000"/>
<line x1="720" y1="230.5" x2="726" y2="230.5" stroke="#000"/>
<line x1="720" y1="243.5" x2="732" y2="243.5" stroke="#000"/>
<line x1="720" y1="257.5" x2="726" y2="257.5" stroke="#000"/>
<line x1="720" y1="270.5" x2="732" y2="270.5" stroke="#000"/>
<line x1="720" y1="283.5" x2="726" y2="283.5" stroke="#000"/>
<line x1="720" y1="297.5" x2="732" y2="297.5" stroke="#000"/>
<line x1="720" y1="310.5" x2="726" y2="310.5" stroke="#000"/>
<line x1="720" y1="323.5" x2="732" y2="323.5" stroke="#000"/>
<line x1="720" y1="337.5" x2="726" y2="337.5" stroke="#000"/>
<line x1="720" y1="350.5" x2="732" y2="350.5" stroke="#000"/>
<line x1="720" y1="363.5" x2="726" y2="363.5" stroke="#000"/>
<line x1="720" y1="377.5" x2="732" y2="377.5" stroke="#000"/>
<line x1="720.5" y1="198" x2="720.5" y2="378" stroke="#000"/>
</svg>
<svg style="position:absolute;left:0;top:0" width="1345" height="916">
<path d="M219.60 535.1 L220.00 500.5 L220.40 517.5 L220.80 498.8 L221.20 515.2 L221.60 486.4 L222.00 513.0 L222.40 492.4 L222.80 509.1 L223.20 490.4 L223.60 501.4 L224.00 477.7 L224.40 498.0 L224.80 485.9 L225.20 503.5 L225.60 483.4 L226.00 493.4 L226.40 477.1 L226.80 494.5 L227.20 466.0 L227.60 493.8 L228.00 469.2 L228.40 491.6 L228.80 472.2 L229.20 492.6 L229.60 477.4 L230.00 484.0 L230.40 469.3 L230.80 483.5 L231.20 461.2 L231.60 486.0 L232.00 465.1 L232.40 481.4 L232.80 468.0 L233.20 485.9 L233.60 460.6 L234.00 487.2 L234.40 472.2 L234.80 495.1 L235.20 471.8 L235.60 489.8 L236.00 466.9 L236.40 496.3 L236.80 478.4 L237.20 496.1 L237.60 486.9 L238.00 509.7 L238.40 486.2 L238.80 507.0 L239.20 493.6 L239.60 510.1 L240.00 492.4 L240.40 512.0 L240.80 496.9 L241.20 515.7 L241.60 497.5 L242.00 517.3 L242.40 499.7 L242.80 518.9 L243.20 507.6 L243.60 523.9 L244.00 510.1 L244.40 527.1 L244.80 514.8 L245.20 529.3 L245.60 522.2 L246.00 528.5 L246.40 521.1 L246.80 530.6 L247.20 521.4 L247.60 532.5 L248.00 528.9 L248.40 541.8 L248.80 528.2 L249.20 537.7 L249.60 532.8 L250.00 543.0 L250.40 533.6 L250.80 542.5 L251.20 535.5 L251.60 544.0 L252.00 538.6 L252.40 545.2 L252.80 536.7 L253.20 547.9 L253.60 539.3 L254.00 550.5 L254.40 539.6 L254.80 546.6 L255.20 540.1 L255.60 548.7 L256.00 539.2 L256.40 550.6 L256.80 545.4 L257.20 553.6 L257.60 546.3 L258.00 555.4 L258.40 549.3 L258.80 560.1 L259.20 551.9 L259.60 559.5 L260.00 555.4 L260.40 567.2 L260.80 556.4 L261.20 562.4 L261.60 556.8 L262.00 562.1 L262.40 557.1 L262.80 562.4 L263.20 557.5 L263.60 566.0 L264.00 557.2 L264.40 563.0 L264.80 551.9 L265.20 561.9 L265.60 553.3 L266.00 562.9 L266.40 556.9 L266.80 564.5 L267.20 558.0 L267.60 563.9 L268.00 561.0 L268.40 565.9 L268.80 560.6 L269.20 565.9 L269.60 563.5 L270.00 567.9 L270.40 564.8 L270.80 571.5 L271.20 565.0 L271.60 570.0 L272.00 564.1 L272.40 574.0 L272.80 568.4 L273.20 573.2 L273.60 566.7 L274.00 573.1 L274.40 569.5 L274.80 575.4 L275.20 572.3 L275.60 575.9 L276.00 572.4 L276.40 575.7 L276.80 570.6 L277.20 577.5 L277.60 570.3 L278.00 580.8 L278.40 570.8 L278.80 576.4 L279.20 570.8 L279.60 577.3 L280.00 572.9 L280.40 576.3 L280.80 569.9 L281.20 576.6 L281.60 572.5 L282.00 578.0 L282.40 571.2 L282.80 578.0 L283.20 570.0 L283.60 578.4 L284.00 571.7 L284.40 577.1 L284.80 571.5 L285.20 577.3 L285.60 572.0 L286.00 578.9 L286.40 569.1 L286.80 577.7 L287.20 568.7 L287.60 576.3 L288.00 569.1 L288.40 577.3 L288.80 570.0 L289.20 577.6 L289.60 565.7 L290.00 576.6 L290.40 567.4 L290.80 578.2 L291.20 569.2 L291.60 574.9 L292.00 568.0 L292.40 575.5 L292.80 567.8 L293.20 578.2 L293.60 566.2 L294.00 579.4 L294.40 566.9 L294.80 579.7 L295.20 568.1 L295.60 575.6 L296.00 561.8 L296.40 578.2 L296.80 559.5 L297.20 570.7 L297.60 564.4 L298.00 570.5 L298.40 558.8 L298.80 569.3 L299.20 560.6 L299.60 569.6 L300.00 553.2 L300.40 567.5 L300.80 553.1 L301.20 562.7 L301.60 550.2 L302.00 564.3 L302.40 553.0 L302.80 558.8 L303.20 552.2 L303.60 558.5 L304.00 543.0 L304.40 559.1 L304.80 545.3 L305.20 557.8 L305.60 544.4 L306.00 562.0 L306.40 547.4 L306.80 556.1 L307.20 544.5 L307.60 558.6 L308.00 548.2 L308.40 557.5 L308.80 544.7 L309.20 564.5 L309.60 548.5 L310.00 560.7 L310.40 548.1 L310.80 561.9 L311.20 551.9 L311.60 560.8 L312.00 552.4 L312.40 559.9 L312.80 549.7 L313.20 568.7 L313.60 546.0 L314.00 562.1 L314.40 549.5 L314.80 567.3 L315.20 553.0 L315.60 567.7 L316.00 557.2 L316.40 571.0 L316.80 555.7 L317.20 561.4 L317.60 549.4 L318.00 558.2 L318.40 546.5 L318.80 551.2 L319.20 534.5 L319.60 548.5 L320.00 532.5 L320.40 544.7 L320.80 529.3 L321.20 540.8 L321.60 526.3 L322.00 537.4 L322.40 526.0 L322.80 536.6 L323.20 520.3 L323.60 536.0 L324.00 519.3 L324.40 528.6 L324.80 519.8 L325.20 526.3 L325.60 518.4 L326.00 524.8 L326.40 514.6 L326.80 520.3 L327.20 509.8 L327.60 516.9 L328.00 508.1 L328.40 517.1 L328.80 502.3 L329.20 510.6 L329.60 500.4 L330.00 513.3 L330.40 491.8 L330.80 513.3 L331.20 491.8 L331.60 504.1 L332.00 491.0 L332.40 506.0 L332.80 477.3 L333.20 502.2 L333.60 485.8 L334.00 500.2 L334.40 485.0 L334.80 503.4 L335.20 480.3 L335.60 493.3 L336.00 465.6 L336.40 481.3 L336.80 467.4 L337.20 483.0 L337.60 475.6 L338.00 491.0 L338.40 476.4 L338.80 491.2 L339.20 480.8 L339.60 492.5 L340.00 474.3 L340.40 504.9 L340.80 481.8 L341.20 498.3 L341.60 472.9 L342.00 500.8 L342.40 480.7 L342.80 496.9 L343.20 482.1 L343.60 505.9 L344.00 476.3 L344.40 502.2 L344.80 479.9 L345.20 493.1 L345.60 476.0 L346.00 497.6 L346.40 474.3 L346.80 501.0 L347.20 473.8 L347.60 496.1 L348.00 473.0 L348.40 497.9 L348.80 476.3 L349.20 500.5 L349.60 485.8 L350.00 504.6 L350.40 477.2 L350.80 507.7 L351.20 486.1 L351.60 503.0 L352.00 490.8 L352.40 515.2 L352.80 489.9 L353.20 520.7 L353.60 496.4 L354.00 523.2 L354.40 489.7 L354.80 530.9 L355.20 506.2 L355.60 523.7 L356.00 508.4 L356.40 525.5 L356.80 494.8 L357.20 521.4 L357.60 497.7 L358.00 512.0 L358.40 511.7 L358.80 536.4 L359.20 525.8 L359.60 550.6 L360.00 547.9 L360.40 568.3" fill="none" stroke="#000" stroke-width="1"/>
<path d="M372.80 548.0 L373.20 536.0 L373.60 530.5 L374.00 513.6 L374.40 513.1 L374.80 489.7 L375.20 499.0 L375.60 477.6 L376.00 499.5 L376.40 478.1 L376.80 494.2 L377.20 481.8 L377.60 497.6 L378.00 480.8 L378.40 498.6 L378.80 482.1 L379.20 496.5 L379.60 484.9 L380.00 496.3 L380.40 483.4 L380.80 491.8 L381.20 480.2 L381.60 493.6 L382.00 481.0 L382.40 491.0 L382.80 473.8 L383.20 495.0 L383.60 468.4 L384.00 486.1 L384.40 471.9 L384.80 490.5 L385.20 472.5 L385.60 482.0 L386.00 469.5 L386.40 481.9 L386.80 469.3 L387.20 479.3 L387.60 466.0 L388.00 484.5 L388.40 462.0 L388.80 480.0 L389.20 458.6 L389.60 475.6 L390.00 453.1 L390.40 487.4 L390.80 464.2 L391.20 489.2 L391.60 469.7 L392.00 495.4 L392.40 461.3 L392.80 492.5 L393.20 471.5 L393.60 502.2 L394.00 472.7 L394.40 492.0 L394.80 472.4 L395.20 484.9 L395.60 462.9 L396.00 478.4 L396.40 459.7 L396.80 478.2 L397.20 460.9 L397.60 482.3 L398.00 463.0 L398.40 479.0 L398.80 456.1 L399.20 483.2 L399.60 466.3 L400.00 481.6 L400.40 471.9 L400.80 483.2 L401.20 470.4 L401.60 482.7 L402.00 471.6 L402.40 484.2 L402.80 481.0 L403.20 488.6 L403.60 484.0 L404.00 492.2 L404.40 484.9 L404.80 496.1 L405.20 490.1 L405.60 496.5 L406.00 484.2 L406.40 497.2 L406.80 488.1 L407.20 498.0 L407.60 482.5 L408.00 496.8 L408.40 481.6 L408.80 493.9 L409.20 479.9 L409.60 493.5 L410.00 481.4 L410.40 488.0 L410.80 475.8 L411.20 487.6 L411.60 476.6 L412.00 485.1 L412.40 477.3 L412.80 486.9 L413.20 478.5 L413.60 488.4 L414.00 475.9 L414.40 485.0 L414.80 479.1 L415.20 489.2 L415.60 477.4 L416.00 490.1 L416.40 480.0 L416.80 490.7 L417.20 480.5 L417.60 489.2 L418.00 484.3 L418.40 490.1 L418.80 485.5 L419.20 493.6 L419.60 486.8 L420.00 495.1 L420.40 480.6 L420.80 496.0 L421.20 488.0 L421.60 500.0 L422.00 484.3 L422.40 499.4 L422.80 489.9 L423.20 505.5 L423.60 489.3 L424.00 502.2 L424.40 493.5 L424.80 501.7 L425.20 492.5 L425.60 506.4 L426.00 490.4 L426.40 507.3 L426.80 494.9 L427.20 507.5 L427.60 492.9 L428.00 503.2 L428.40 494.3 L428.80 503.4 L429.20 490.0 L429.60 503.8 L430.00 498.9 L430.40 507.0 L430.80 494.9 L431.20 510.9 L431.60 497.1 L432.00 506.7 L432.40 495.3 L432.80 510.0 L433.20 499.9 L433.60 513.2 L434.00 497.8 L434.40 510.7 L434.80 500.0 L435.20 510.5 L435.60 500.1 L436.00 507.6 L436.40 497.7 L436.80 508.4 L437.20 493.3 L437.60 508.1 L438.00 498.5 L438.40 508.0 L438.80 498.1 L439.20 509.6 L439.60 500.0 L440.00 509.7 L440.40 501.0 L440.80 507.0 L441.20 494.5 L441.60 508.1 L442.00 497.3 L442.40 507.4 L442.80 494.6 L443.20 511.3 L443.60 500.9 L444.00 517.1 L444.40 495.7 L444.80 507.5 L445.20 500.0 L445.60 506.7 L446.00 496.9 L446.40 507.0 L446.80 492.2 L447.20 514.8 L447.60 489.9 L448.00 507.3 L448.40 492.4 L448.80 505.0 L449.20 492.5 L449.60 506.5 L450.00 495.0 L450.40 506.3 L450.80 493.4 L451.20 506.1 L451.60 493.9 L452.00 510.6 L452.40 496.1 L452.80 508.0 L453.20 494.7 L453.60 511.6 L454.00 493.5 L454.40 505.3 L454.80 494.8 L455.20 506.8 L455.60 493.0 L456.00 505.6 L456.40 480.7 L456.80 497.6 L457.20 488.5 L457.60 505.9 L458.00 482.1 L458.40 495.4 L458.80 485.7 L459.20 495.2 L459.60 481.5 L460.00 496.6 L460.40 481.5 L460.80 501.9 L461.20 483.5 L461.60 501.7 L462.00 490.5 L462.40 505.5 L462.80 488.2 L463.20 504.6 L463.60 497.0 L464.00 506.3 L464.40 493.6 L464.80 518.9 L465.20 496.0 L465.60 511.4 L466.00 499.5 L466.40 511.0 L466.80 494.7 L467.20 523.4 L467.60 499.9 L468.00 518.1 L468.40 502.5 L468.80 518.3 L469.20 508.2 L469.60 522.6 L470.00 505.6 L470.40 520.1 L470.80 502.7 L471.20 527.1 L471.60 505.6 L472.00 520.9 L472.40 511.9 L472.80 520.7 L473.20 505.9 L473.60 517.0 L474.00 498.4 L474.40 513.8 L474.80 494.1 L475.20 514.9 L475.60 491.2 L476.00 518.6 L476.40 486.1 L476.80 518.6 L477.20 495.6 L477.60 512.5 L478.00 495.4 L478.40 514.2 L478.80 488.4 L479.20 514.7 L479.60 497.4 L480.00 507.2 L480.40 489.9 L480.80 511.2 L481.20 494.0 L481.60 508.4 L482.00 490.7 L482.40 511.9 L482.80 492.0 L483.20 520.4 L483.60 497.1 L484.00 522.6 L484.40 498.4 L484.80 518.6 L485.20 509.5 L485.60 538.5 L486.00 511.7 L486.40 539.9 L486.80 518.0 L487.20 553.7 L487.60 520.6 L488.00 545.6 L488.40 506.1 L488.80 540.3 L489.20 508.0 L489.60 541.5 L490.00 512.3 L490.40 535.2 L490.80 495.6 L491.20 529.9 L491.60 512.2 L492.00 520.9 L492.40 507.5 L492.80 526.8 L493.20 505.6 L493.60 525.6 L494.00 503.4 L494.40 523.8 L494.80 498.5 L495.20 527.5 L495.60 496.6 L496.00 514.2 L496.40 488.8 L496.80 518.5 L497.20 490.6 L497.60 522.7 L498.00 491.7 L498.40 504.4 L498.80 487.1 L499.20 511.1 L499.60 490.7 L500.00 510.3 L500.40 477.8 L500.80 501.6 L501.20 484.4 L501.60 507.1 L502.00 488.7 L502.40 503.6 L502.80 484.8 L503.20 500.0 L503.60 484.1 L504.00 503.2 L504.40 486.3 L504.80 504.5 L505.20 489.2 L505.60 500.9 L506.00 483.7 L506.40 498.6 L506.80 479.8 L507.20 501.6 L507.60 482.6 L508.00 499.2 L508.40 477.9 L508.80 496.8 L509.20 464.4 L509.60 491.3 L510.00 468.9 L510.40 499.2 L510.80 477.2 L511.20 498.3 L511.60 471.5 L512.00 502.9 L512.40 485.5 L512.80 498.7 L513.20 481.9 L513.60 512.4 L514.00 490.3 L514.40 521.4 L514.80 501.6 L515.20 518.3 L515.60 502.6 L516.00 529.1 L516.40 501.6 L516.80 524.8 L517.20 499.6 L517.60 519.3 L518.00 507.7 L518.40 527.8 L518.80 509.6 L519.20 531.6 L519.60 508.6 L520.00 545.0 L520.40 516.2 L520.80 544.6 L521.20 519.9 L521.60 550.0 L522.00 531.7 L522.40 555.6" fill="none" stroke="#000" stroke-width="1"/>
<path d="M534.00 566.1 L534.40 544.0 L534.80 555.8 L535.20 538.4 L535.60 554.1 L536.00 526.9 L536.40 537.4 L536.80 518.7 L537.20 522.8 L537.60 507.4 L538.00 521.8 L538.40 500.1 L538.80 522.6 L539.20 502.4 L539.60 513.4 L540.00 488.9 L540.40 515.7 L540.80 497.8 L541.20 513.3 L541.60 490.3 L542.00 510.9 L542.40 482.8 L542.80 506.2 L543.20 488.0 L543.60 508.6 L544.00 488.1 L544.40 501.4 L544.80 472.0 L545.20 504.7 L545.60 476.6 L546.00 499.3 L546.40 479.2 L546.80 490.6 L547.20 463.9 L547.60 501.6 L548.00 470.8 L548.40 496.2 L548.80 471.4 L549.20 488.4 L549.60 466.5 L550.00 487.4 L550.40 479.8 L550.80 493.9 L551.20 484.0 L551.60 501.6 L552.00 490.1 L552.40 507.4 L552.80 494.2 L553.20 513.1 L553.60 499.3 L554.00 510.9 L554.40 501.6 L554.80 518.9 L555.20 506.9 L555.60 522.1 L556.00 511.3 L556.40 527.1 L556.80 511.4 L557.20 532.0 L557.60 519.3 L558.00 533.2 L558.40 514.8 L558.80 535.6 L559.20 522.8 L559.60 546.6 L560.00 534.3 L560.40 549.5 L560.80 531.2 L561.20 554.2 L561.60 532.6 L562.00 559.8 L562.40 525.8 L562.80 552.6 L563.20 536.2 L563.60 568.3 L564.00 535.9 L564.40 556.2 L564.80 543.2 L565.20 566.5 L565.60 545.4 L566.00 566.1 L566.40 545.9 L566.80 574.9 L567.20 538.6 L567.60 581.2 L568.00 556.2 L568.40 572.9 L568.80 552.4 L569.20 571.0 L569.60 553.8 L570.00 573.9 L570.40 553.9 L570.80 586.6 L571.20 566.6 L571.60 583.8 L572.00 556.6 L572.40 584.2 L572.80 571.4 L573.20 584.9 L573.60 565.7 L574.00 587.1 L574.40 576.0 L574.80 593.2 L575.20 574.0 L575.60 597.1 L576.00 576.0 L576.40 590.9 L576.80 577.1 L577.20 598.7 L577.60 573.9 L578.00 590.4 L578.40 580.9 L578.80 593.9 L579.20 574.8 L579.60 602.5 L580.00 581.9 L580.40 600.8 L580.80 574.3 L581.20 592.0 L581.60 582.5 L582.00 595.6 L582.40 573.6 L582.80 598.7 L583.20 574.4 L583.60 594.4 L584.00 585.2 L584.40 592.5 L584.80 585.3 L585.20 595.9 L585.60 578.5 L586.00 594.9 L586.40 585.9 L586.80 598.2 L587.20 576.4 L587.60 603.1 L588.00 580.3 L588.40 599.8 L588.80 582.3 L589.20 593.9 L589.60 576.6 L590.00 594.6 L590.40 585.9 L590.80 594.6 L591.20 576.2 L591.60 599.0 L592.00 580.9 L592.40 598.4 L592.80 579.4 L593.20 599.9 L593.60 584.9 L594.00 602.0 L594.40 579.6 L594.80 607.8 L595.20 583.9 L595.60 602.2 L596.00 586.5 L596.40 601.4 L596.80 586.0 L597.20 600.8 L597.60 591.3 L598.00 603.6 L598.40 591.0 L598.80 602.4 L599.20 587.8 L599.60 604.6 L600.00 586.7 L600.40 601.2 L600.80 584.7 L601.20 602.2 L601.60 581.5 L602.00 604.0 L602.40 586.6 L602.80 596.6 L603.20 584.4 L603.60 592.5 L604.00 583.2 L604.40 595.4 L604.80 582.8 L605.20 595.7 L605.60 580.8 L606.00 591.5 L606.40 580.3 L606.80 589.0 L607.20 576.4 L607.60 591.5 L608.00 579.2 L608.40 597.0 L608.80 576.5 L609.20 592.9 L609.60 576.4 L610.00 590.4 L610.40 579.9 L610.80 585.6 L611.20 577.6 L611.60 590.9 L612.00 576.1 L612.40 584.9 L612.80 576.6 L613.20 592.1 L613.60 578.5 L614.00 586.4 L614.40 573.9 L614.80 588.5 L615.20 578.2 L615.60 588.6 L616.00 570.0 L616.40 587.6 L616.80 572.8 L617.20 590.7 L617.60 573.2 L618.00 582.1 L618.40 570.8 L618.80 583.2 L619.20 573.9 L619.60 583.6 L620.00 572.6 L620.40 582.1 L620.80 569.5 L621.20 584.0 L621.60 568.5 L622.00 578.1 L622.40 569.6 L622.80 581.9 L623.20 569.3 L623.60 578.0 L624.00 569.9 L624.40 577.1 L624.80 567.3 L625.20 574.1 L625.60 563.1 L626.00 574.8 L626.40 565.7 L626.80 572.8 L627.20 563.1 L627.60 571.4 L628.00 563.7 L628.40 567.6 L628.80 559.2 L629.20 568.6 L629.60 557.7 L630.00 566.0 L630.40 557.4 L630.80 568.5 L631.20 554.3 L631.60 569.1 L632.00 552.5 L632.40 561.5 L632.80 548.2 L633.20 559.9 L633.60 548.7 L634.00 561.9 L634.40 550.1 L634.80 563.0 L635.20 546.1 L635.60 554.1 L636.00 544.7 L636.40 553.2 L636.80 539.4 L637.20 552.6 L637.60 534.9 L638.00 544.0 L638.40 531.4 L638.80 551.7 L639.20 527.3 L639.60 537.1 L640.00 527.4 L640.40 548.6 L640.80 537.4 L641.20 561.7 L641.60 546.8 L642.00 560.2 L642.40 548.7 L642.80 567.6 L643.20 553.5 L643.60 572.3 L644.00 558.9 L644.40 566.9 L644.80 550.7 L645.20 574.6 L645.60 551.2 L646.00 574.8 L646.40 557.0 L646.80 578.0 L647.20 559.8 L647.60 570.9 L648.00 553.9 L648.40 573.6 L648.80 550.1 L649.20 582.5 L649.60 557.3 L650.00 587.7 L650.40 560.2 L650.80 584.0 L651.20 559.4 L651.60 582.6 L652.00 551.7 L652.40 574.0 L652.80 560.3 L653.20 577.1 L653.60 557.8 L654.00 577.2 L654.40 564.7 L654.80 580.3 L655.20 561.3 L655.60 581.1 L656.00 562.2 L656.40 578.4 L656.80 557.8 L657.20 574.2 L657.60 550.1 L658.00 568.2 L658.40 548.8 L658.80 559.5 L659.20 546.8 L659.60 557.1 L660.00 535.3 L660.40 558.9 L660.80 531.3 L661.20 553.0 L661.60 539.8 L662.00 551.9 L662.40 530.8 L662.80 544.7 L663.20 534.8 L663.60 548.2 L664.00 530.3 L664.40 540.5 L664.80 523.3 L665.20 547.8 L665.60 526.2 L666.00 531.6 L666.40 520.3 L666.80 529.2 L667.20 512.7 L667.60 537.4 L668.00 503.5 L668.40 521.5 L668.80 498.4 L669.20 522.3 L669.60 502.3 L670.00 520.1 L670.40 503.5 L670.80 517.1 L671.20 489.6 L671.60 529.2 L672.00 503.8 L672.40 523.5 L672.80 499.4 L673.20 521.1 L673.60 491.6 L674.00 528.7 L674.40 498.8 L674.80 520.3 L675.20 503.1 L675.60 532.1 L676.00 504.1 L676.40 531.0 L676.80 504.2 L677.20 523.0 L677.60 500.5 L678.00 535.9 L678.40 489.9 L678.80 518.4 L679.20 503.6 L679.60 532.5 L680.00 513.3 L680.40 532.0 L680.80 518.8 L681.20 541.6 L681.60 523.0 L682.00 550.9 L682.40 524.1 L682.80 549.2 L683.20 537.7 L683.60 560.3 L684.00 555.1 L684.40 577.5" fill="none" stroke="#000" stroke-width="1"/>
<path d="M670.5 530 L670.5 595 M511 470 L511 457.5 M389.4 470 L389.4 448.5 M396.4 470 L396.4 447.5 M233.3 470 L233.3 455 M549.5 475 L549.5 462 M487.8 520 L487.8 558 M360 540 L360 580 M598.3 590 L598.3 611 M639.5 530 L639.5 514.6 M219.8 500 L219.8 545 M684.3 560 L684.3 586 M372.8 520 L372.8 550 M534 550 L534 577 M593 590 L593 607" fill="none" stroke="#000" stroke-width="1"/>
</svg>
<span class="t p" style="left:317.30px;top:172.75px;font-size:16.72px;letter-spacing:-0.21px;">RBSP-A/EMFISIS  HFR Spectra Data</span>
<span class="t p" style="left:174.40px;top:268.87px;font-size:16.57px;letter-spacing:-0.83px;">10</span>
<span class="t p" style="left:192.60px;top:260.97px;font-size:15.99px;">5</span>
<span class="t p" style="left:174.40px;top:369.67px;font-size:16.57px;letter-spacing:-0.83px;">10</span>
<span class="t p" style="left:192.60px;top:362.17px;font-size:15.99px;">4</span>
<span class="t p" style="left:146.73px;top:296.90px;font-size:16.86px;letter-spacing:-1.20px;transform-origin:0 0;transform:rotate(-90deg);">Hz</span>
<span class="t p" style="left:790.85px;top:339.00px;font-size:16.72px;letter-spacing:1.48px;transform-origin:0 0;transform:rotate(-90deg);">V^2/m^2/Hz</span>
<span class="t p" style="left:151.65px;top:580.20px;font-size:16.72px;letter-spacing:0.13px;transform-origin:0 0;transform:rotate(-90deg);">e Tperp/Tpar</span>
<span class="t p" style="left:737.60px;top:212.57px;font-size:16.57px;letter-spacing:-1.03px;">10</span>
<span class="t p" style="left:755.50px;top:204.52px;font-size:16.28px;letter-spacing:1.09px;">-10</span>
<span class="t p" style="left:737.60px;top:239.57px;font-size:16.57px;letter-spacing:-1.03px;">10</span>
<span class="t p" style="left:755.50px;top:231.52px;font-size:16.28px;letter-spacing:1.09px;">-12</span>
<span class="t p" style="left:737.60px;top:265.77px;font-size:16.57px;letter-spacing:-1.03px;">10</span>
<span class="t p" style="left:755.50px;top:257.72px;font-size:16.28px;letter-spacing:1.09px;">-14</span>
<span class="t p" style="left:737.60px;top:292.67px;font-size:16.57px;letter-spacing:-1.03px;">10</span>
<span class="t p" style="left:755.50px;top:284.62px;font-size:16.28px;letter-spacing:1.09px;">-16</span>
<span class="t p" style="left:737.60px;top:318.47px;font-size:16.57px;letter-spacing:-1.03px;">10</span>
<span class="t p" style="left:755.50px;top:310.42px;font-size:16.28px;letter-spacing:1.09px;">-18</span>
<span class="t p" style="left:737.60px;top:345.57px;font-size:16.57px;letter-spacing:-1.03px;">10</span>
<span class="t p" style="left:755.50px;top:337.52px;font-size:16.28px;letter-spacing:1.09px;">-20</span>
<span class="t p" style="left:737.60px;top:372.57px;font-size:16.57px;letter-spacing:-1.03px;">10</span>
<span class="t p" style="left:755.50px;top:364.52px;font-size:16.28px;letter-spacing:1.09px;">-22</span>
<span class="t p" style="left:216.70px;top:394.73px;font-size:16.86px;letter-spacing:0.33px;">00:00</span>
<span class="t p" style="left:216.70px;top:410.77px;font-size:16.57px;letter-spacing:0.54px;">2012-12-02</span>
<span class="t p" style="left:648.50px;top:394.73px;font-size:16.86px;letter-spacing:0.33px;">00:00</span>
<span class="t p" style="left:648.50px;top:410.77px;font-size:16.57px;letter-spacing:0.75px;">2012-12-03</span>
<span class="t p" style="left:295.90px;top:399.60px;font-size:17.01px;letter-spacing:0.17px;">RBSP-A/ECT-HOPE-MOM  e Tperp/Tpar</span>
<span class="t p" style="left:178.80px;top:442.98px;font-size:17.15px;letter-spacing:-0.82px;">2.2</span>
<span class="t p" style="left:178.80px;top:466.19px;font-size:17.15px;letter-spacing:-0.82px;">2.0</span>
<span class="t p" style="left:178.80px;top:491.86px;font-size:17.15px;letter-spacing:-0.82px;">1.8</span>
<span class="t p" style="left:178.80px;top:520.54px;font-size:17.15px;letter-spacing:-0.82px;">1.6</span>
<span class="t p" style="left:178.80px;top:553.06px;font-size:17.15px;letter-spacing:-0.82px;">1.4</span>
<span class="t p" style="left:179.80px;top:590.61px;font-size:17.15px;letter-spacing:-1.32px;">1.2</span>
<span class="t p" style="left:215.84px;top:638.67px;font-size:16.57px;letter-spacing:0.75px;">00:00</span>
<span class="t p" style="left:431.84px;top:638.67px;font-size:16.57px;letter-spacing:0.75px;">12:00</span>
<span class="t p" style="left:647.84px;top:638.67px;font-size:16.57px;letter-spacing:0.75px;">00:00</span>
<span class="t p" style="left:215.84px;top:658.72px;font-size:16.57px;letter-spacing:0.75px;">4.225</span>
<span class="t p" style="left:431.84px;top:658.72px;font-size:16.57px;letter-spacing:0.75px;">5.756</span>
<span class="t p" style="left:647.84px;top:658.72px;font-size:16.57px;letter-spacing:0.75px;">3.179</span>
<span class="t p" style="left:157.70px;top:658.72px;font-size:16.57px;">R</span>
<span class="t p" style="left:168.90px;top:668.94px;font-size:10.47px;">E</span>
<span class="t p" style="left:199.60px;top:678.77px;font-size:16.57px;letter-spacing:0.75px;">-10.580</span>
<span class="t p" style="left:425.57px;top:678.77px;font-size:16.57px;letter-spacing:0.75px;">-1.544</span>
<span class="t p" style="left:631.60px;top:678.77px;font-size:16.57px;letter-spacing:0.75px;">-16.190</span>
<span class="t p" style="left:135.97px;top:678.77px;font-size:16.57px;letter-spacing:0.50px;">MLat</span>
<span class="t p" style="left:215.84px;top:698.82px;font-size:16.57px;letter-spacing:0.75px;">2.247</span>
<span class="t p" style="left:431.84px;top:698.82px;font-size:16.57px;letter-spacing:0.75px;">5.398</span>
<span class="t p" style="left:647.84px;top:698.82px;font-size:16.57px;letter-spacing:0.75px;">8.125</span>
<span class="t p" style="left:141.39px;top:698.82px;font-size:16.57px;letter-spacing:0.50px;">MLT</span>
<span class="t p" style="left:215.84px;top:718.87px;font-size:16.57px;letter-spacing:0.75px;">4.373</span>
<span class="t p" style="left:431.84px;top:718.87px;font-size:16.57px;letter-spacing:0.75px;">5.760</span>
<span class="t p" style="left:647.84px;top:718.87px;font-size:16.57px;letter-spacing:0.75px;">3.447</span>
<span class="t p" style="left:165.09px;top:718.87px;font-size:16.57px;">L</span>
<span class="t p" style="left:252.80px;top:743.07px;font-size:16.57px;letter-spacing:0.66px;">2012-12-01 (336) 23:00 to 2012-12-03 (338) 01:00</span>
<div style="position:absolute;left:346px;top:359px;width:246px;height:89px;box-sizing:border-box;border:1px solid #a8a8a8;border-radius:5px 5px 0 0;background:linear-gradient(#ececec,#d4d4d4 25px,#fff 25px)"></div>
<div style="position:absolute;left:347px;top:384px;width:243px;height:62px;background:#fcfcfc;border-left:1px solid #fff"></div>
<div style="position:absolute;left:590px;top:362px;width:1px;height:85px;background:#9a9a9a"></div>
<div style="position:absolute;left:346px;top:446px;width:246px;height:2px;background:#a8a8a8"></div>
<svg style="position:absolute;left:359px;top:368px" width="11" height="8"><path d="M0.5 0.5 L9.5 0.5 L5 6.5 Z" fill="#9a9a9a"/></svg>
<svg style="position:absolute;left:567px;top:367px" width="12" height="12"><path d="M2 2 L10 10 M10 2 L2 10" stroke="#8a8a8a" stroke-width="2.2"/></svg>
<span class="t" style="left:411.50px;top:365.89px;font-size:13.95px;letter-spacing:-0.07px;font-weight:bold;color:#7a7470;">Progress Monitor</span>
<span class="t" style="left:414.30px;top:383.79px;font-size:15.60px;letter-spacing:1.21px;color:#222;-webkit-text-stroke:0.35px #222;">running batch</span>
<span class="t" style="left:363.02px;top:400.50px;font-size:9.80px;letter-spacing:0.36px;color:#222;-webkit-text-stroke:0.2px #222;">write /hom...walk3/product_20121203_00.png</span>
<div style="position:absolute;left:349px;top:411px;width:220px;height:20px;box-sizing:border-box;border:1px solid #7a8ca8;background:#eeeeee"></div>
<div style="position:absolute;left:350px;top:412px;width:17px;height:18px;background:#a4b6cc"></div>
<div style="position:absolute;left:569px;top:411px;width:20px;height:20px;box-sizing:border-box;border:1px solid #7a8ca8;background:linear-gradient(#ffffff,#c6d8ec)"></div>
<svg style="position:absolute;left:572px;top:414px" width="15" height="15"><rect x="0.5" y="0.5" width="14" height="14" rx="3" fill="#e03a3a" stroke="#a82020"/><path d="M4.5 4.5 L10.5 10.5 M10.5 4.5 L4.5 10.5" stroke="#fff" stroke-width="2.4"/></svg>
<span class="t" style="left:385.50px;top:432.22px;font-size:12.50px;letter-spacing:1.06px;font-weight:bold;color:#222;">5/62 (1.6/sec, eta 36.1 s)</span>
</body></html>
